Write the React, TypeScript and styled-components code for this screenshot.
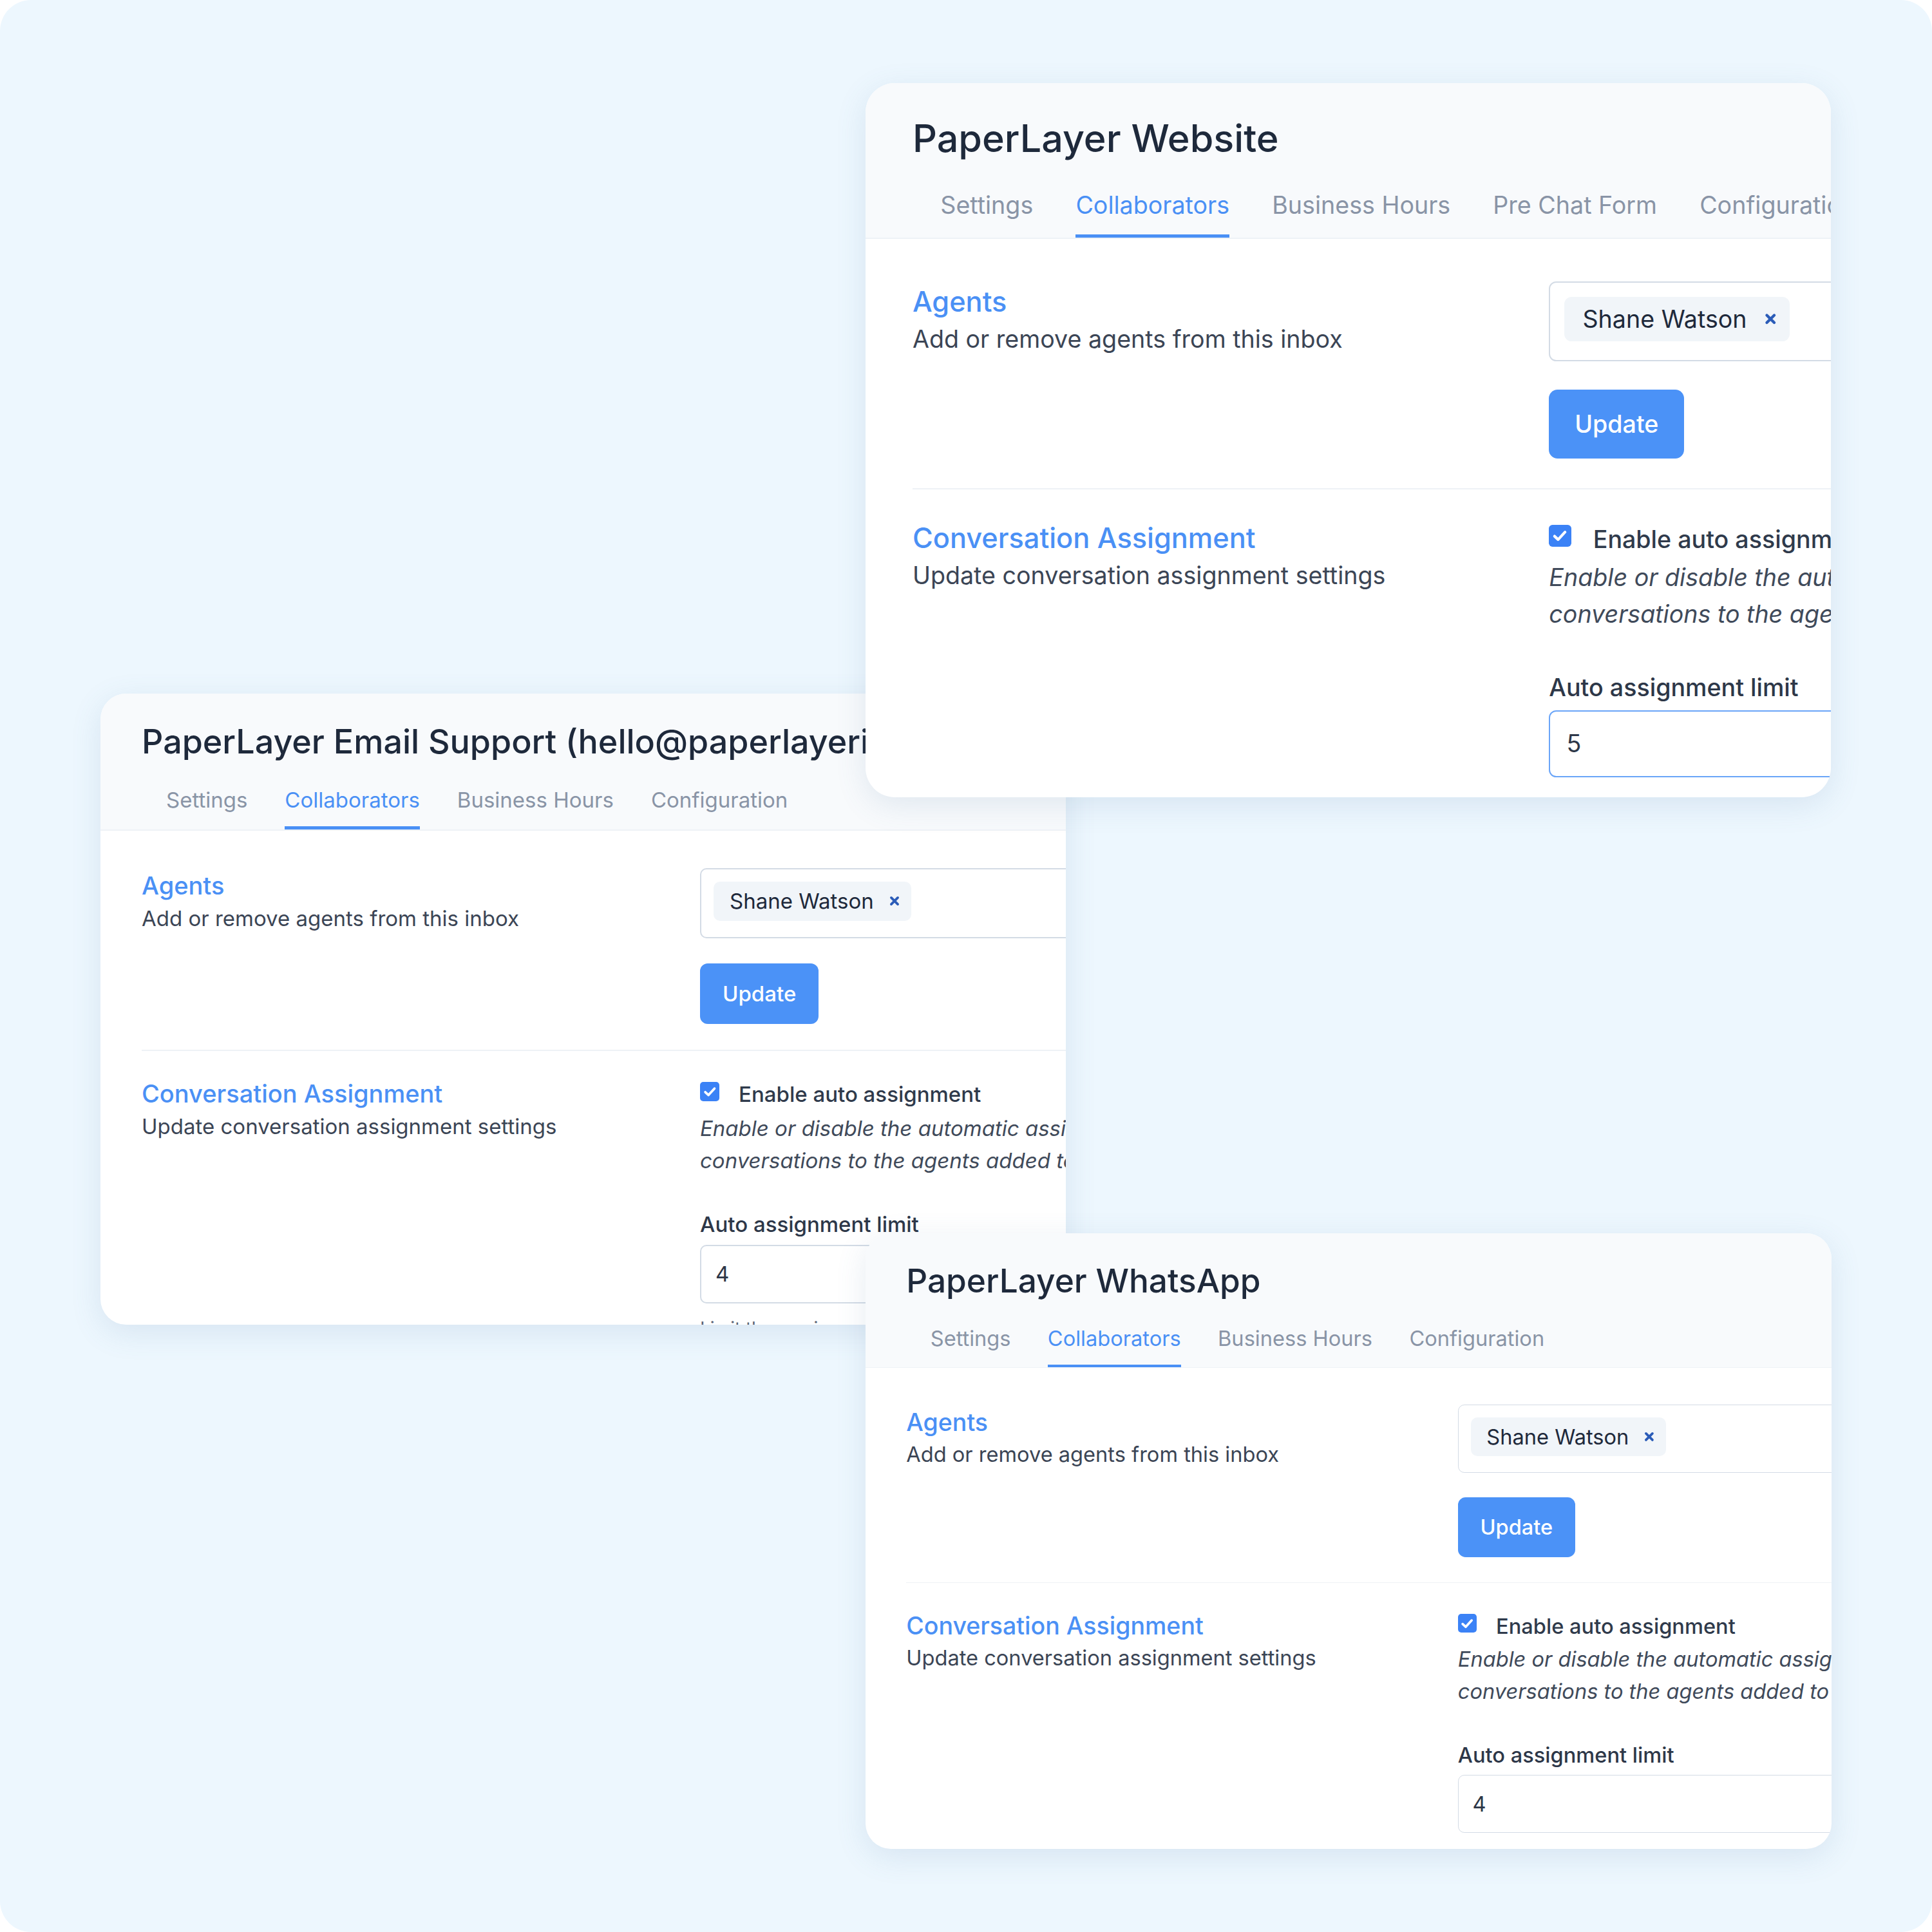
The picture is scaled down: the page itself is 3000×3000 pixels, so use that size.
import React from "react";
import styled, { createGlobalStyle } from "styled-components";

// every size inside a card is written in "base pixels" and multiplied by --u,
// so the same card can be shown at a different zoom level
const u = (n: number) => `calc(${n} * var(--u))`;

const GlobalStyle = createGlobalStyle`
  html, body {
    margin: 0;
    padding: 0;
    background: #ffffff;
  }
  body {
    font-family: Inter, "Noto Sans", "Liberation Sans", sans-serif;
    -webkit-font-smoothing: antialiased;
  }
  * {
    box-sizing: border-box;
  }
`;

const Canvas = styled.div`
  position: relative;
  width: 3000px;
  height: 3000px;
  border-radius: 48px;
  background: #edf7fe;
  overflow: hidden;
`;

const CardFrame = styled.div<{ $x: number; $y: number; $w: number; $h: number; $u: number }>`
  --u: ${p => p.$u}px;
  position: absolute;
  left: ${p => p.$x}px;
  top: ${p => p.$y}px;
  width: ${p => p.$w}px;
  height: ${p => p.$h}px;
  border-radius: ${u(40)};
  background: #ffffff;
  overflow: hidden;
  box-shadow: 0 12px 48px rgba(80, 120, 160, 0.14);
`;

const Header = styled.div`
  background: #f8fafc;
  padding: ${u(44)} 0 0 ${u(64)};
  border-bottom: ${u(2)} solid #eef2f6;
`;

const Title = styled.h1`
  margin: 0;
  font-size: ${u(52)};
  line-height: 1.2;
  font-weight: 500;
  color: #1e293b;
  white-space: nowrap;
`;

const Tabs = styled.nav`
  display: flex;
  gap: ${u(58)};
  margin: ${u(39.8)} 0 0 ${u(38)};
  white-space: nowrap;
`;

const Tab = styled.span<{ $active?: boolean }>`
  font-size: ${u(33)};
  line-height: 1.2;
  padding-bottom: ${u(20.2)};
  border-bottom: ${u(5)} solid ${p => (p.$active ? "#4a90f5" : "transparent")};
  color: ${p => (p.$active ? "#4a90f5" : "#8994a6")};
`;

const Body = styled.div`
  padding-left: ${u(64)};
`;

const Section = styled.section<{ $top: number; $divider?: boolean }>`
  display: grid;
  grid-template-columns: ${u(867)} ${u(820)};
  align-items: start;
  padding-top: ${p => u(p.$top)};
  padding-bottom: ${p => (p.$divider ? u(40) : "0")};
  border-bottom: ${p => (p.$divider ? `${u(2)} solid #eef2f6` : "none")};
`;

const SectionTitle = styled.h2<{ $offset: number }>`
  margin: ${p => u(p.$offset)} 0 0;
  font-size: ${u(38)};
  line-height: 1.2;
  font-weight: 500;
  color: #4a90f5;
  white-space: nowrap;
`;

const SectionDesc = styled.p`
  margin: ${u(8)} 0 0;
  font-size: ${u(33)};
  line-height: 1.2;
  color: #3b4555;
  white-space: nowrap;
`;

const Field = styled.div`
  display: flex;
  flex-direction: column;
  align-items: flex-start;
`;

const TagInput = styled.div`
  width: 100%;
  display: flex;
  border: ${u(2)} solid #d3dbe5;
  border-radius: ${u(10)};
  padding: ${u(19)} ${u(19)} ${u(25)};
`;

const Chip = styled.span`
  display: inline-flex;
  align-items: center;
  gap: ${u(23)};
  height: ${u(61)};
  padding: 0 ${u(17)} 0 ${u(25)};
  background: #f1f5f9;
  border-radius: ${u(10)};
  font-size: ${u(33)};
  color: #1e293b;
  white-space: nowrap;

  svg {
    width: ${u(18)};
    height: ${u(18)};
  }
`;

const Button = styled.button`
  margin-top: ${u(39)};
  height: ${u(94)};
  padding: 0 ${u(35)};
  border: none;
  border-radius: ${u(12)};
  background: #4b92f7;
  color: #ffffff;
  font-family: inherit;
  font-size: ${u(33)};
  font-weight: 500;
`;

const CheckRow = styled.label`
  display: flex;
  align-items: flex-start;
  gap: ${u(30)};
  margin-top: ${u(3)};
  font-size: ${u(33)};
  line-height: 1.2;
  font-weight: 500;
  color: #2f3a4b;
  white-space: nowrap;
`;

const CheckBox = styled.span`
  flex-shrink: 0;
  width: ${u(30)};
  height: ${u(30)};
  border-radius: ${u(5)};
  background: #3b82f6;
  display: flex;
  align-items: center;
  justify-content: center;

  svg {
    width: 82%;
    height: 82%;
  }
`;

const Hint = styled.p`
  margin: ${u(7.4)} 0 0;
  font-size: ${u(33)};
  line-height: ${u(50)};
  font-style: italic;
  color: #3f4a5a;
  white-space: nowrap;
`;

const FieldLabel = styled.div`
  margin-top: ${u(55.2)};
  font-size: ${u(33)};
  line-height: 1.2;
  font-weight: 500;
  color: #2d3748;
  white-space: nowrap;
`;

const NumberInput = styled.div<{ $focused?: boolean }>`
  margin-top: ${u(11.2)};
  width: 100%;
  height: ${u(91)};
  display: flex;
  align-items: center;
  padding: 0 ${u(22)};
  border: ${u(2)} solid ${p => (p.$focused ? "#6aa5f8" : "#d3dbe5")};
  border-radius: ${u(10)};
  font-size: ${u(33)};
  color: #2d3748;
`;

const HelpText = styled.p`
  margin: ${u(23)} 0 0;
  font-size: ${u(28)};
  line-height: 1.2;
  color: #5b6576;
  white-space: nowrap;
`;

const CloseIcon = () => (
  <svg viewBox="0 0 16 16" fill="none">
    <path d="M3.5 3.5L12.5 12.5M12.5 3.5L3.5 12.5" stroke="#2b5cb8" strokeWidth="3.4" strokeLinecap="round" />
  </svg>
);

const CheckIcon = () => (
  <svg viewBox="0 0 24 24" fill="none">
    <path d="M5 12.5L9.8 17L19 7" stroke="#ffffff" strokeWidth="3.6" strokeLinecap="round" strokeLinejoin="round" />
  </svg>
);

interface InboxCardProps {
  title: string;
  tabs: string[];
  limit: string;
  focused?: boolean;
  x: number;
  y: number;
  w: number;
  h: number;
  scale: number;
}

const InboxCard = (props: InboxCardProps) => (
  <CardFrame $x={props.x} $y={props.y} $w={props.w} $h={props.h} $u={props.scale}>
    <Header>
      <Title>{props.title}</Title>
      <Tabs>
        {props.tabs.map(t => (
          <Tab key={t} $active={t === "Collaborators"}>
            {t}
          </Tab>
        ))}
      </Tabs>
    </Header>
    <Body>
      <Section $top={58} $divider>
        <div>
          <SectionTitle $offset={5}>Agents</SectionTitle>
          <SectionDesc>Add or remove agents from this inbox</SectionDesc>
        </div>
        <Field>
          <TagInput>
            <Chip>
              Shane Watson
              <CloseIcon />
            </Chip>
          </TagInput>
          <Button>Update</Button>
        </Field>
      </Section>
      <Section $top={45}>
        <div>
          <SectionTitle $offset={-1}>Conversation Assignment</SectionTitle>
          <SectionDesc>Update conversation assignment settings</SectionDesc>
        </div>
        <Field>
          <CheckRow>
            <CheckBox>
              <CheckIcon />
            </CheckBox>
            Enable auto assignment
          </CheckRow>
          <Hint>
            Enable or disable the automatic assignment of new
            <br />
            conversations to the agents added to this inbox.
          </Hint>
          <FieldLabel>Auto assignment limit</FieldLabel>
          <NumberInput $focused={props.focused}>{props.limit}</NumberInput>
          <HelpText>Limit the maximum number of conversations from this inbox that can be auto assigned to an agent</HelpText>
        </Field>
      </Section>
    </Body>
  </CardFrame>
);

const shortTabs = ["Settings", "Collaborators", "Business Hours", "Configuration"];

export default function App() {
  return (
    <>
      <GlobalStyle />
      <Canvas>
        <InboxCard
          title="PaperLayer Email Support (hello@paperlayerio.com)"
          tabs={shortTabs}
          limit="4"
          x={156}
          y={1077}
          w={1499}
          h={980}
          scale={1}
        />
        <InboxCard
          title="PaperLayer Website"
          tabs={["Settings", "Collaborators", "Business Hours", "Pre Chat Form", "Configuration"]}
          limit="5"
          focused
          x={1344}
          y={129}
          w={1499}
          h={1109}
          scale={1.14}
        />
        <InboxCard
          title="PaperLayer WhatsApp"
          tabs={shortTabs}
          limit="4"
          x={1344}
          y={1915}
          w={1500}
          h={956}
          scale={0.988}
        />
      </Canvas>
    </>
  );
}
